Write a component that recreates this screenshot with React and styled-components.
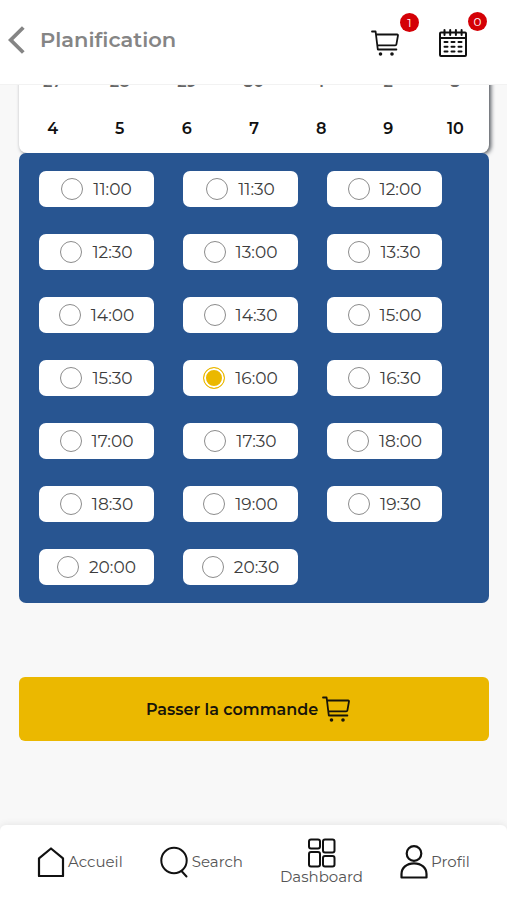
import React, { useState } from 'react';
import styled, { createGlobalStyle } from 'styled-components';

const GlobalStyle = createGlobalStyle`
  * { box-sizing: border-box; }
  body {
    margin: 0;
    background: #f8f8f8;
    color: #111;
    font-family: Montserrat, Inter, sans-serif;
  }
  button, input { font: inherit; color: inherit; }
  svg { display: block; flex: none; }
`;

const Page = styled.div`
  display: flex;
  flex-direction: column;
  min-height: 100vh;
`;

const Header = styled.header`
  position: sticky;
  top: 0;
  z-index: 2;
  display: flex;
  align-items: center;
  height: 85px;
  padding: 0 40px 4px 8px;
  background: #fff;
  border-bottom: 1px solid #f2f2f2;
`;

const IconButton = styled.button`
  position: relative;
  display: flex;
  padding: 0;
  border: 0;
  background: none;
  color: ${(p) => (p.$muted ? '#858585' : '#111')};
  cursor: pointer;
`;

const Title = styled.h1`
  flex: 1;
  margin: 0 0 0 15px;
  color: #858585;
  font-size: 21px;
  font-weight: 600;
  line-height: 28px;
`;

const Actions = styled.div`
  display: flex;
  align-items: center;
  gap: 40px;
  padding-top: 6px;
`;

const Badge = styled.span`
  position: absolute;
  top: -17px;
  right: -20px;
  width: 19px;
  height: 19px;
  border-radius: 50%;
  background: #d40006;
  color: #fff;
  font-size: 12px;
  line-height: 19px;
  text-align: center;
`;

const Main = styled.main`
  flex: 1;
  padding: 0 18px 84px 19px;
`;

const Calendar = styled.table`
  width: 100%;
  margin-top: -26px;
  border-collapse: collapse;
  table-layout: fixed;
  border-radius: 8px;
  background: #fff;
  box-shadow: 2px 1px 4px #50555c;
`;

const Day = styled.td`
  height: 47px;
  padding: 0 0 2px;
  color: ${(p) => (p.$past ? '#666' : '#111')};
  font-size: 16px;
  font-weight: 600;
  text-align: center;
`;

const Slots = styled.fieldset`
  position: relative;
  display: grid;
  grid-template-columns: repeat(3, 1fr);
  gap: 27px 29px;
  min-width: 0;
  margin: 0;
  padding: 18px 47px 18px 20px;
  border: 0;
  border-radius: 7px;
  background: #285591;
`;

const Slot = styled.label`
  display: flex;
  align-items: center;
  justify-content: center;
  gap: 10px;
  height: 36px;
  border-radius: 7px;
  background: #fff;
  color: #3c3c3c;
  font-size: 17px;
  cursor: pointer;
`;

const Radio = styled.input`
  appearance: none;
  width: 22px;
  height: 22px;
  margin: 0;
  border: 1px solid #8c8c8c;
  border-radius: 50%;
  background: #fff;

  &:checked {
    border-color: #ebb800;
    background: #ebb800;
    box-shadow: inset 0 0 0 2px #fff;
  }
`;

const OrderButton = styled.button`
  display: flex;
  align-items: center;
  justify-content: center;
  gap: 4px;
  width: 100%;
  height: 64px;
  margin-top: 74px;
  padding: 0 12px 0 0;
  border: 0;
  border-radius: 6px;
  background: #ebb800;
  color: #17140a;
  font-size: 16px;
  font-weight: 600;
  cursor: pointer;
`;

const BottomNav = styled.nav`
  position: sticky;
  bottom: 0;
  z-index: 2;
  display: flex;
  align-items: center;
  justify-content: space-evenly;
  height: 75px;
  padding-bottom: 2px;
  border-radius: 6px 6px 0 0;
  background: #fff;
  box-shadow: 0 -1px 6px #e6e6e6;
`;

const NavLink = styled.a`
  display: flex;
  flex-direction: ${(p) => (p.$stacked ? 'column' : 'row')};
  align-items: center;
  gap: ${(p) => (p.$stacked ? '0' : '3px')};
  color: #555;
  font-size: 15px;
  line-height: 18px;
  text-decoration: none;

  svg { color: #111; }
`;

const CartIcon = () => (
  <svg width="28" height="26" viewBox="0 0 28 26" fill="none" stroke="currentColor" strokeWidth="1.8" strokeLinecap="round" strokeLinejoin="round" aria-hidden="true">
    <path d="M1 1.5h3.6l2.2 18h18.6M5 4.5h21.2q.9 0 .8.9l-1.6 8.9q-.2 1-1.2 1H6.3" />
    <circle cx="9.5" cy="24" r="1.1" fill="currentColor" strokeWidth="1.4" />
    <circle cx="21" cy="24" r="1.1" fill="currentColor" strokeWidth="1.4" />
  </svg>
);

const CalendarIcon = () => (
  <svg width="28" height="28" viewBox="0 0 28 28" fill="none" stroke="currentColor" strokeWidth="2" strokeLinecap="round" aria-hidden="true">
    <rect x="1" y="3.5" width="26" height="23.5" rx="1" />
    <path d="M1 9h26M5.5 1v5M11.2 1v5M16.9 1v5M22.6 1v5" />
    <path d="M5.5 13h3M12.5 13h3M19.5 13h3M5.5 17.8h3M12.5 17.8h3M19.5 17.8h3M5.5 22.6h3M12.5 22.6h3M19.5 22.6h3" />
  </svg>
);

const BackIcon = () => (
  <svg width="17" height="28" viewBox="0 0 17 28" fill="none" stroke="currentColor" strokeWidth="3.8" aria-hidden="true">
    <path d="M15.3 1.5 2.7 14l12.6 12.5" />
  </svg>
);

const HomeIcon = () => (
  <svg width="28" height="30" viewBox="0 0 28 30" fill="none" stroke="currentColor" strokeWidth="2.2" strokeLinejoin="round" aria-hidden="true">
    <path d="M2 29V11.3L14 1.5l12 9.8V29Z" />
  </svg>
);

const SearchIcon = () => (
  <svg width="29" height="32" viewBox="0 0 29 32" fill="none" stroke="currentColor" strokeWidth="2" strokeLinecap="round" aria-hidden="true">
    <circle cx="14" cy="14.5" r="12.7" />
    <path d="m21.5 25 5 5.5" />
  </svg>
);

const DashboardIcon = () => (
  <svg width="28" height="30" viewBox="0 0 28 30" fill="none" stroke="currentColor" strokeWidth="2" aria-hidden="true">
    <rect x="1" y="1.5" width="11" height="9" rx="2" />
    <rect x="15" y="1.5" width="11.5" height="13" rx="2" />
    <rect x="1" y="14" width="11" height="14.5" rx="2" />
    <rect x="15" y="18" width="11.5" height="10.5" rx="2" />
  </svg>
);

const ProfileIcon = () => (
  <svg width="28" height="34" viewBox="0 0 28 34" fill="none" stroke="currentColor" strokeWidth="2.2" strokeLinejoin="round" aria-hidden="true">
    <circle cx="14" cy="8.5" r="7.3" />
    <path d="M1.5 32.5V29c0-6 5-10.7 12.5-10.7S26.5 23 26.5 29v3.5Z" />
  </svg>
);

const pastWeek = [27, 28, 29, 30, 1, 2, 3];
const nextWeek = [4, 5, 6, 7, 8, 9, 10];
const times = [
  '11:00', '11:30', '12:00', '12:30', '13:00', '13:30', '14:00', '14:30', '15:00', '15:30',
  '16:00', '16:30', '17:00', '17:30', '18:00', '18:30', '19:00', '19:30', '20:00', '20:30',
];
const links = [
  { label: 'Accueil', Icon: HomeIcon },
  { label: 'Search', Icon: SearchIcon },
  { label: 'Dashboard', Icon: DashboardIcon, stacked: true },
  { label: 'Profil', Icon: ProfileIcon },
];

export default function App() {
  const [time, setTime] = useState('16:00');
  return (
    <Page>
      <GlobalStyle />
      <Header>
        <IconButton $muted aria-label="Retour"><BackIcon /></IconButton>
        <Title>Planification</Title>
        <Actions>
          <IconButton aria-label="Panier"><CartIcon /><Badge>1</Badge></IconButton>
          <IconButton aria-label="Calendrier"><CalendarIcon /><Badge>0</Badge></IconButton>
        </Actions>
      </Header>
      <Main>
        <Calendar>
          <tbody>
            <tr>{pastWeek.map((d) => <Day key={d} $past>{d}</Day>)}</tr>
            <tr>{nextWeek.map((d) => <Day key={d}>{d}</Day>)}</tr>
          </tbody>
        </Calendar>
        <Slots aria-label="Horaires">
          {times.map((t) => (
            <Slot key={t}>
              <Radio type="radio" name="time" value={t} checked={t === time} onChange={() => setTime(t)} />
              {t}
            </Slot>
          ))}
        </Slots>
        <OrderButton type="button">Passer la commande <CartIcon /></OrderButton>
      </Main>
      <BottomNav>
        {links.map(({ label, Icon, stacked }) => (
          <NavLink key={label} href="#" $stacked={stacked}><Icon />{label}</NavLink>
        ))}
      </BottomNav>
    </Page>
  );
}
